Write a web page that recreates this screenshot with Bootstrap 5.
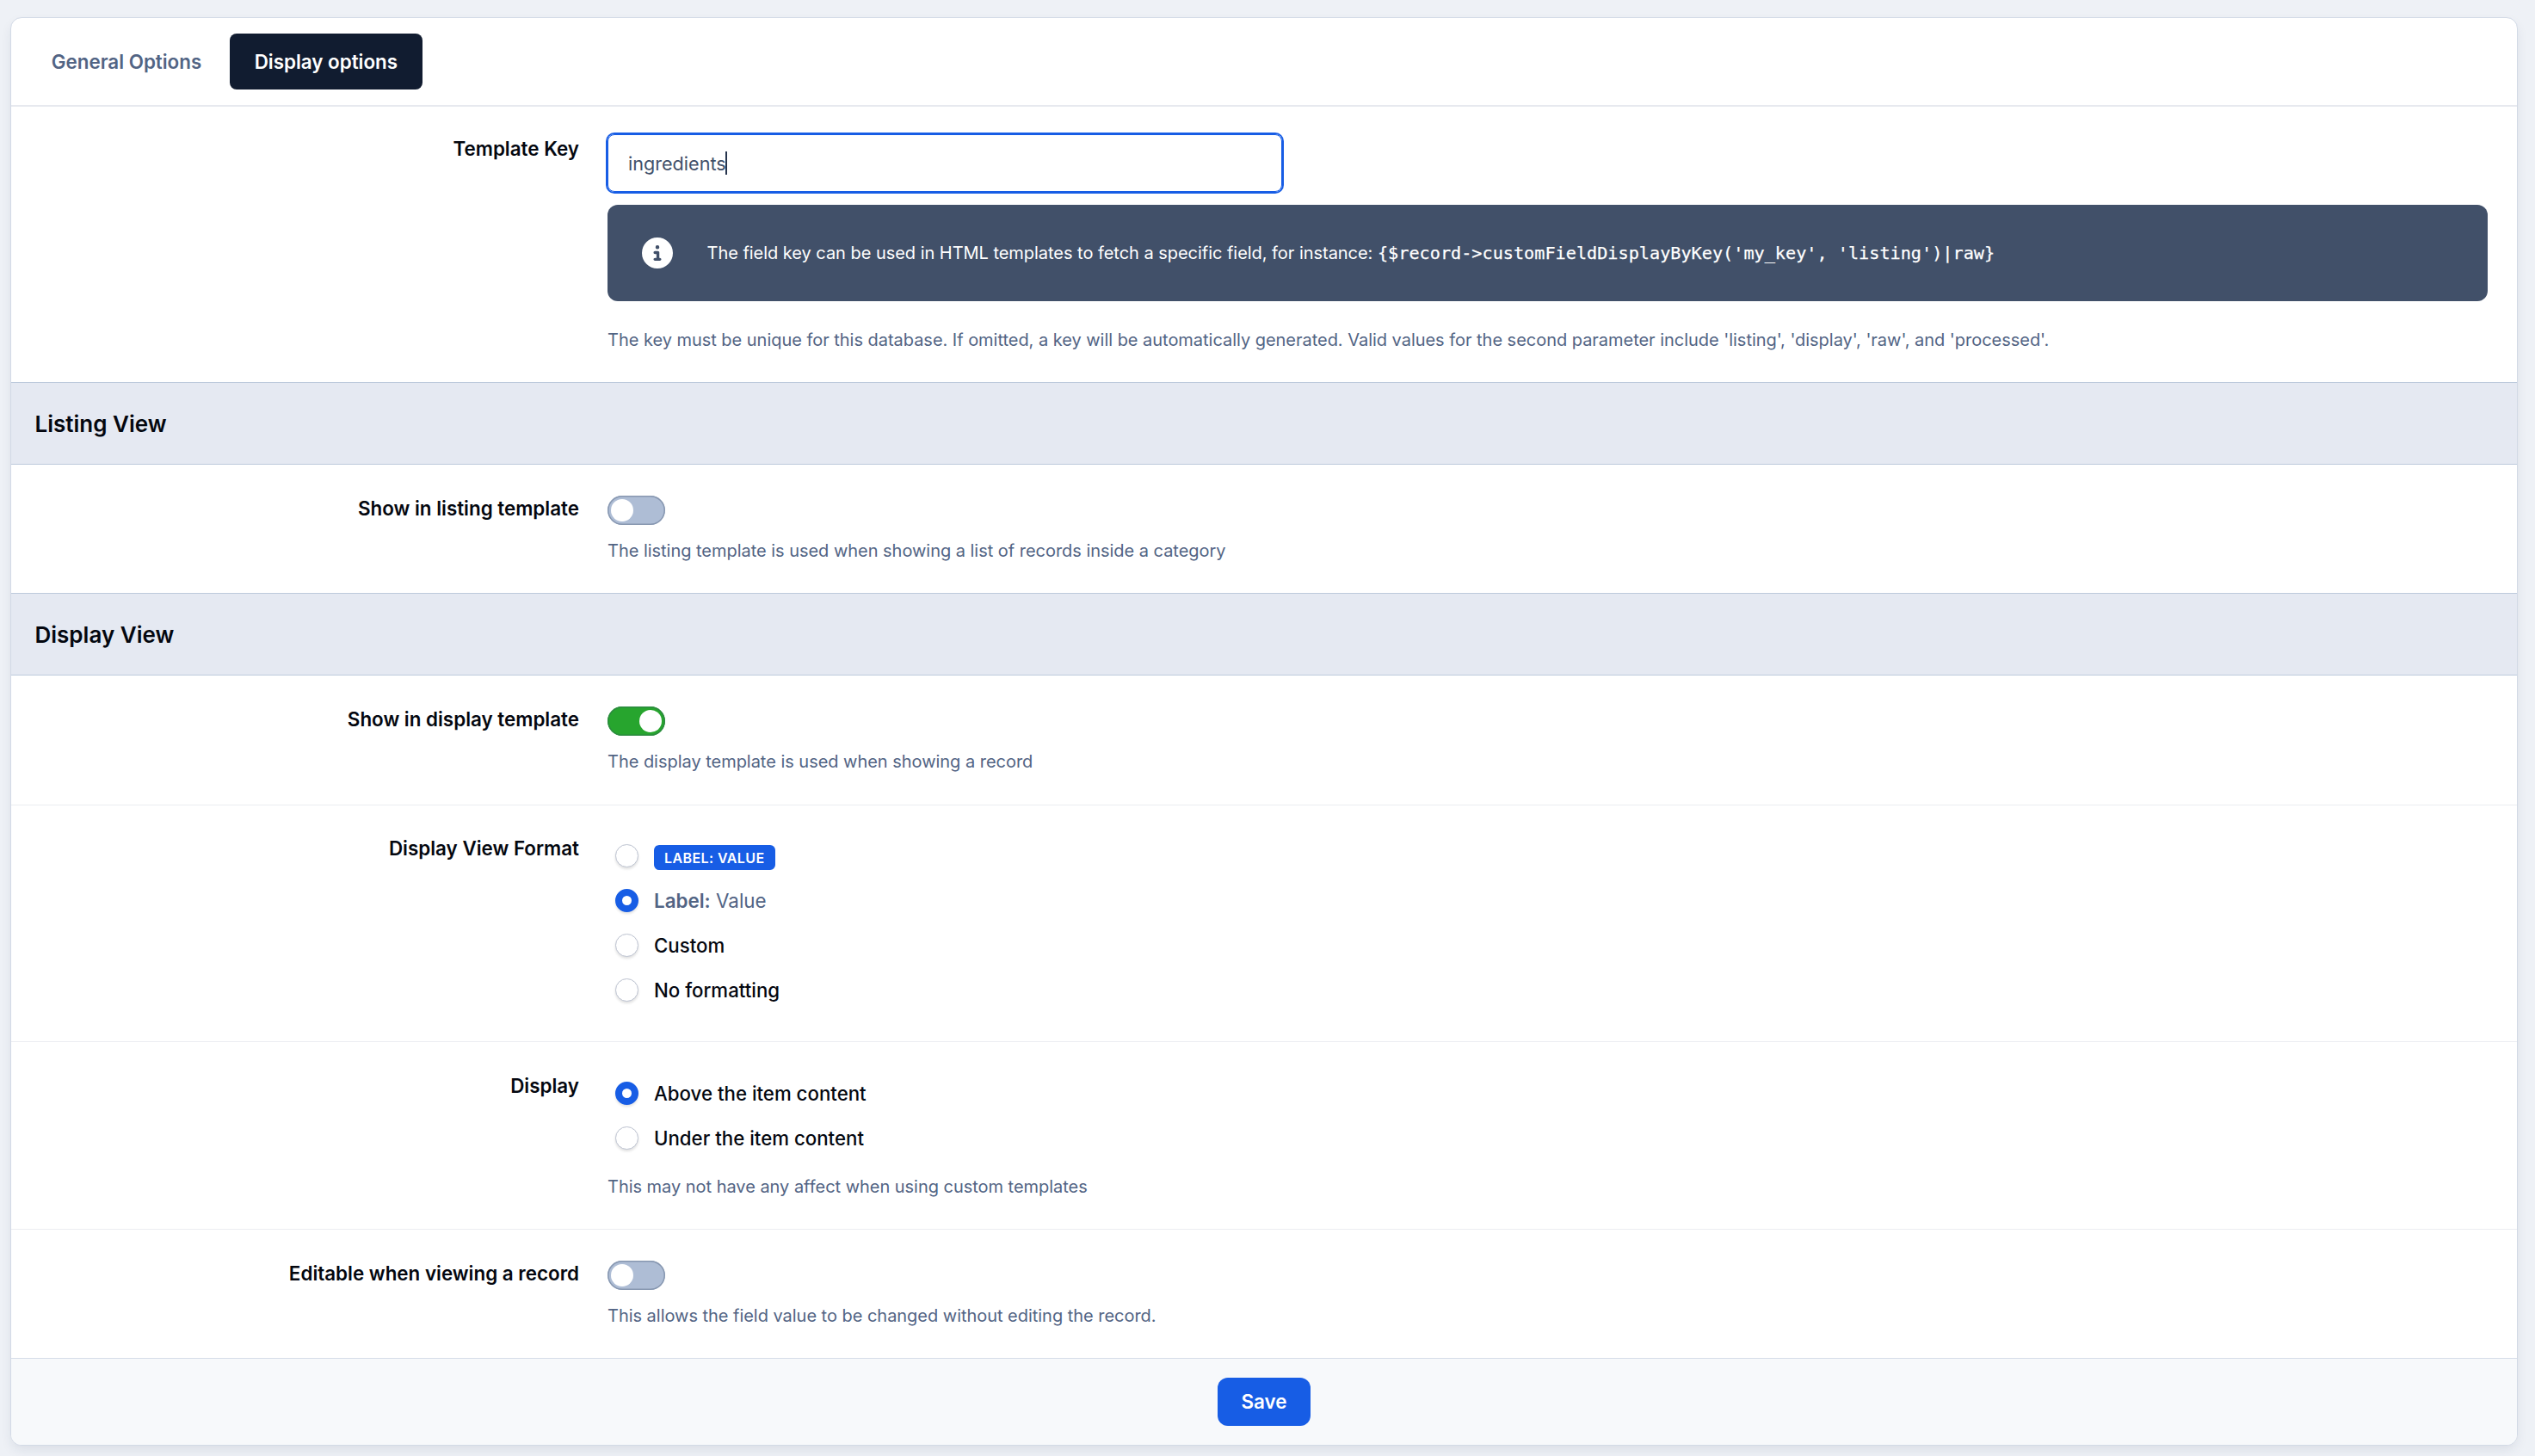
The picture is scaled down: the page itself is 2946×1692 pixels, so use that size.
<!DOCTYPE html>
<html lang="en">

<head>
  <meta charset="UTF-8" />
  <title>Edit Field</title>
  <meta name="viewport" content="width=device-width, initial-scale=1.0" />
  <link href="https://cdn.jsdelivr.net/npm/bootstrap@5.3.0/dist/css/bootstrap.min.css" rel="stylesheet" />
  <style>
    body {
      background: #eef1f6;
      color: #04070f;
      font-family: Inter, "Liberation Sans", sans-serif;
      font-size: 22.4px;
      line-height: 30px;
      padding: 20px 19px 12px 12px;
      overflow: hidden;
    }

    .panel {
      width: 2914px;
      border: 1px solid #d2dae6;
      border-radius: 13px;
      box-shadow: 0 6px 14px -2px rgba(30, 45, 75, .1);
      overflow: hidden;
    }

    /* Tabs */
    .tab-bar {
      padding: 18px;
      border-bottom: 2px solid #e7e9ef;
      gap: 4px;
    }

    .tab-bar .nav-link {
      height: 65px;
      padding: 17.5px 28.7px;
      border-radius: 8px;
      color: #526484;
      font-weight: 600;
    }

    .tab-bar .nav-link.active {
      background: #111c30;
      color: #fff;
    }

    /* Form rows */
    .section-title {
      height: 96px;
      padding: 2px 0 0 27.5px;
      margin: 0;
      background: #e5e9f2;
      border-top: 1px solid #bdcadc;
      border-bottom: 1px solid #bdcadc;
      color: inherit;
      font-size: 26px;
      font-weight: 600;
    }

    .field-row {
      padding: 36px 34px 0 0;
      gap: 33px;
    }

    .field-row + .field-row {
      border-top: 1px solid #ebedf1;
    }

    .field-label {
      width: 660px;
      flex: none;
      text-align: right;
      font-weight: 600;
    }

    .row-key { height: 320px; padding-top: 32px; }
    .row-key .field-label { margin-top: 2px; }
    .row-listing { height: 149px; }
    .row-show { height: 150px; }
    .row-format { height: 275px; padding-top: 32px; }
    .row-format .field-label { margin-top: 3px; }
    .row-position { height: 218px; padding-top: 33px; }
    .row-position .field-label { margin-top: 3px; }
    .row-editable { height: 150px; }

    .help {
      margin: 15px 0 0;
      color: #526484;
      font-size: 20px;
      letter-spacing: -.03px;
    }

    .row-key .help { margin-top: 30px; }
    .row-position .help { margin-top: 16px; }

    .key-input {
      width: 784px;
      height: 67px;
      padding: 0 23px;
      border: 1px solid #175de5;
      border-radius: 8px;
      box-shadow: 0 0 0 2px #175de5;
      color: #415069;
      font-size: 21.6px;
    }

    .caret {
      width: 2px;
      height: 27px;
      margin-left: -1px;
      background: #26344d;
    }

    .notice {
      height: 112px;
      margin-top: 15px;
      padding: 0 40px;
      gap: 39.5px;
      border-radius: 12px;
      background: #415069;
      color: #fff;
      font-size: 20px;
      letter-spacing: -.035px;
    }

    .notice code {
      color: #fff;
      font-family: "DejaVu Sans Mono", monospace;
      font-size: 20.16px;
      letter-spacing: .02px;
      -webkit-text-stroke: .25px #fff;
    }

    /* Switches */
    .switch {
      width: 67px;
      height: 34px;
      padding: 4px;
      border-radius: 17px;
      background: #aebdd5;
      box-shadow: inset 0 0 0 1.5px #8797b0;
    }

    .switch.on {
      background: #27a52e;
      box-shadow: inset 0 0 0 1.5px #2c8a40;
    }

    .knob {
      width: 26px;
      height: 26px;
      border-radius: 50%;
      background: #fff;
    }

    /* Radios */
    .choice {
      height: 52px;
      padding-left: 8.5px;
      gap: 18.5px;
      font-size: 22.25px;
      font-weight: 500;
    }

    .choice-text {
      padding-top: 2px;
    }

    .dot {
      width: 27px;
      height: 27px;
      border-radius: 50%;
      border: 1px solid #bcc2d0;
      background: #fff;
      box-shadow: 0 2px 3px rgba(0, 0, 0, .12);
    }

    .dot.on {
      border: 8.5px solid #175de5;
    }

    .muted { color: #526484; font-size: 22.4px; font-weight: 400; }
    .muted b { font-weight: 600; }

    .tag {
      height: 29px;
      margin: 4px 0 0 0;
      padding: 1px 12px 0;
      border-radius: 6px;
      background: #175de5;
      color: #fff;
      font-size: 16px;
      font-weight: 600;
      line-height: 29px;
      letter-spacing: .4px;
    }

    .panel-foot {
      height: 101px;
      background: #f7f9fb;
      border-top: 1px solid #d5dce8;
    }

    .btn-save {
      width: 108px;
      height: 56px;
      padding: 0;
      border: 0;
      border-radius: 12px;
      background: #175de5;
      color: #fff;
      font-size: 22.4px;
      font-weight: 600;
    }
  </style>
</head>

<body>
  <form class="panel bg-white">
    <nav class="tab-bar nav nav-pills">
      <a class="nav-link" href="#">General Options</a>
      <a class="nav-link active" href="#">Display options</a>
    </nav>

    <div class="field-row row-key d-flex">
      <div class="field-label">Template Key</div>
      <div class="flex-grow-1">
        <div class="key-input d-flex align-items-center">ingredients<span class="caret"></span></div>
        <div class="notice d-flex align-items-center">
          <svg width="36" height="36" viewBox="0 0 512 512" fill="#fff">
            <path d="M256 512A256 256 0 1 0 256 0a256 256 0 1 0 0 512zM216 336h24V272H216c-13.300 0-24-10.700-24-24s10.700-24 24-24h48c13.300 0 24 10.700 24 24v88h8c13.300 0 24 10.700 24 24s-10.700 24-24 24H216c-13.300 0-24-10.700-24-24s10.700-24 24-24zm40-208a32 32 0 1 1 0 64 32 32 0 1 1 0-64z" />
          </svg>
          <div>The field key can be used in HTML templates to fetch a specific field, for instance: <code>{$record-&gt;customFieldDisplayByKey('my_key', 'listing')|raw}</code></div>
        </div>
        <p class="help">The key must be unique for this database. If omitted, a key will be automatically generated. Valid values for the second parameter include 'listing', 'display', 'raw', and 'processed'.</p>
      </div>
    </div>

    <h2 class="section-title d-flex align-items-center">Listing View</h2>

    <div class="field-row row-listing d-flex">
      <div class="field-label">Show in listing template</div>
      <div class="flex-grow-1">
        <div class="switch d-flex"><span class="knob"></span></div>
        <p class="help">The listing template is used when showing a list of records inside a category</p>
      </div>
    </div>

    <h2 class="section-title d-flex align-items-center">Display View</h2>

    <div class="field-row row-show d-flex">
      <div class="field-label">Show in display template</div>
      <div class="flex-grow-1">
        <div class="switch on d-flex justify-content-end"><span class="knob"></span></div>
        <p class="help">The display template is used when showing a record</p>
      </div>
    </div>

    <div class="field-row row-format d-flex">
      <div class="field-label">Display View Format</div>
      <div class="flex-grow-1">
        <div class="choice d-flex align-items-center"><span class="dot"></span><span class="tag">LABEL: VALUE</span></div>
        <div class="choice d-flex align-items-center"><span class="dot on"></span><span class="choice-text muted"><b>Label:</b> Value</span></div>
        <div class="choice d-flex align-items-center"><span class="dot"></span><span class="choice-text">Custom</span></div>
        <div class="choice d-flex align-items-center"><span class="dot"></span><span class="choice-text">No formatting</span></div>
      </div>
    </div>

    <div class="field-row row-position d-flex">
      <div class="field-label">Display</div>
      <div class="flex-grow-1">
        <div class="choice d-flex align-items-center"><span class="dot on"></span><span class="choice-text">Above the item content</span></div>
        <div class="choice d-flex align-items-center"><span class="dot"></span><span class="choice-text">Under the item content</span></div>
        <p class="help">This may not have any affect when using custom templates</p>
      </div>
    </div>

    <div class="field-row row-editable d-flex">
      <div class="field-label">Editable when viewing a record</div>
      <div class="flex-grow-1">
        <div class="switch d-flex"><span class="knob"></span></div>
        <p class="help">This allows the field value to be changed without editing the record.</p>
      </div>
    </div>

    <div class="panel-foot d-flex align-items-center justify-content-center">
      <button type="button" class="btn-save btn">Save</button>
    </div>
  </form>

  <script src="https://cdn.jsdelivr.net/npm/bootstrap@5.3.0/dist/js/bootstrap.bundle.min.js"></script>
</body>

</html>
